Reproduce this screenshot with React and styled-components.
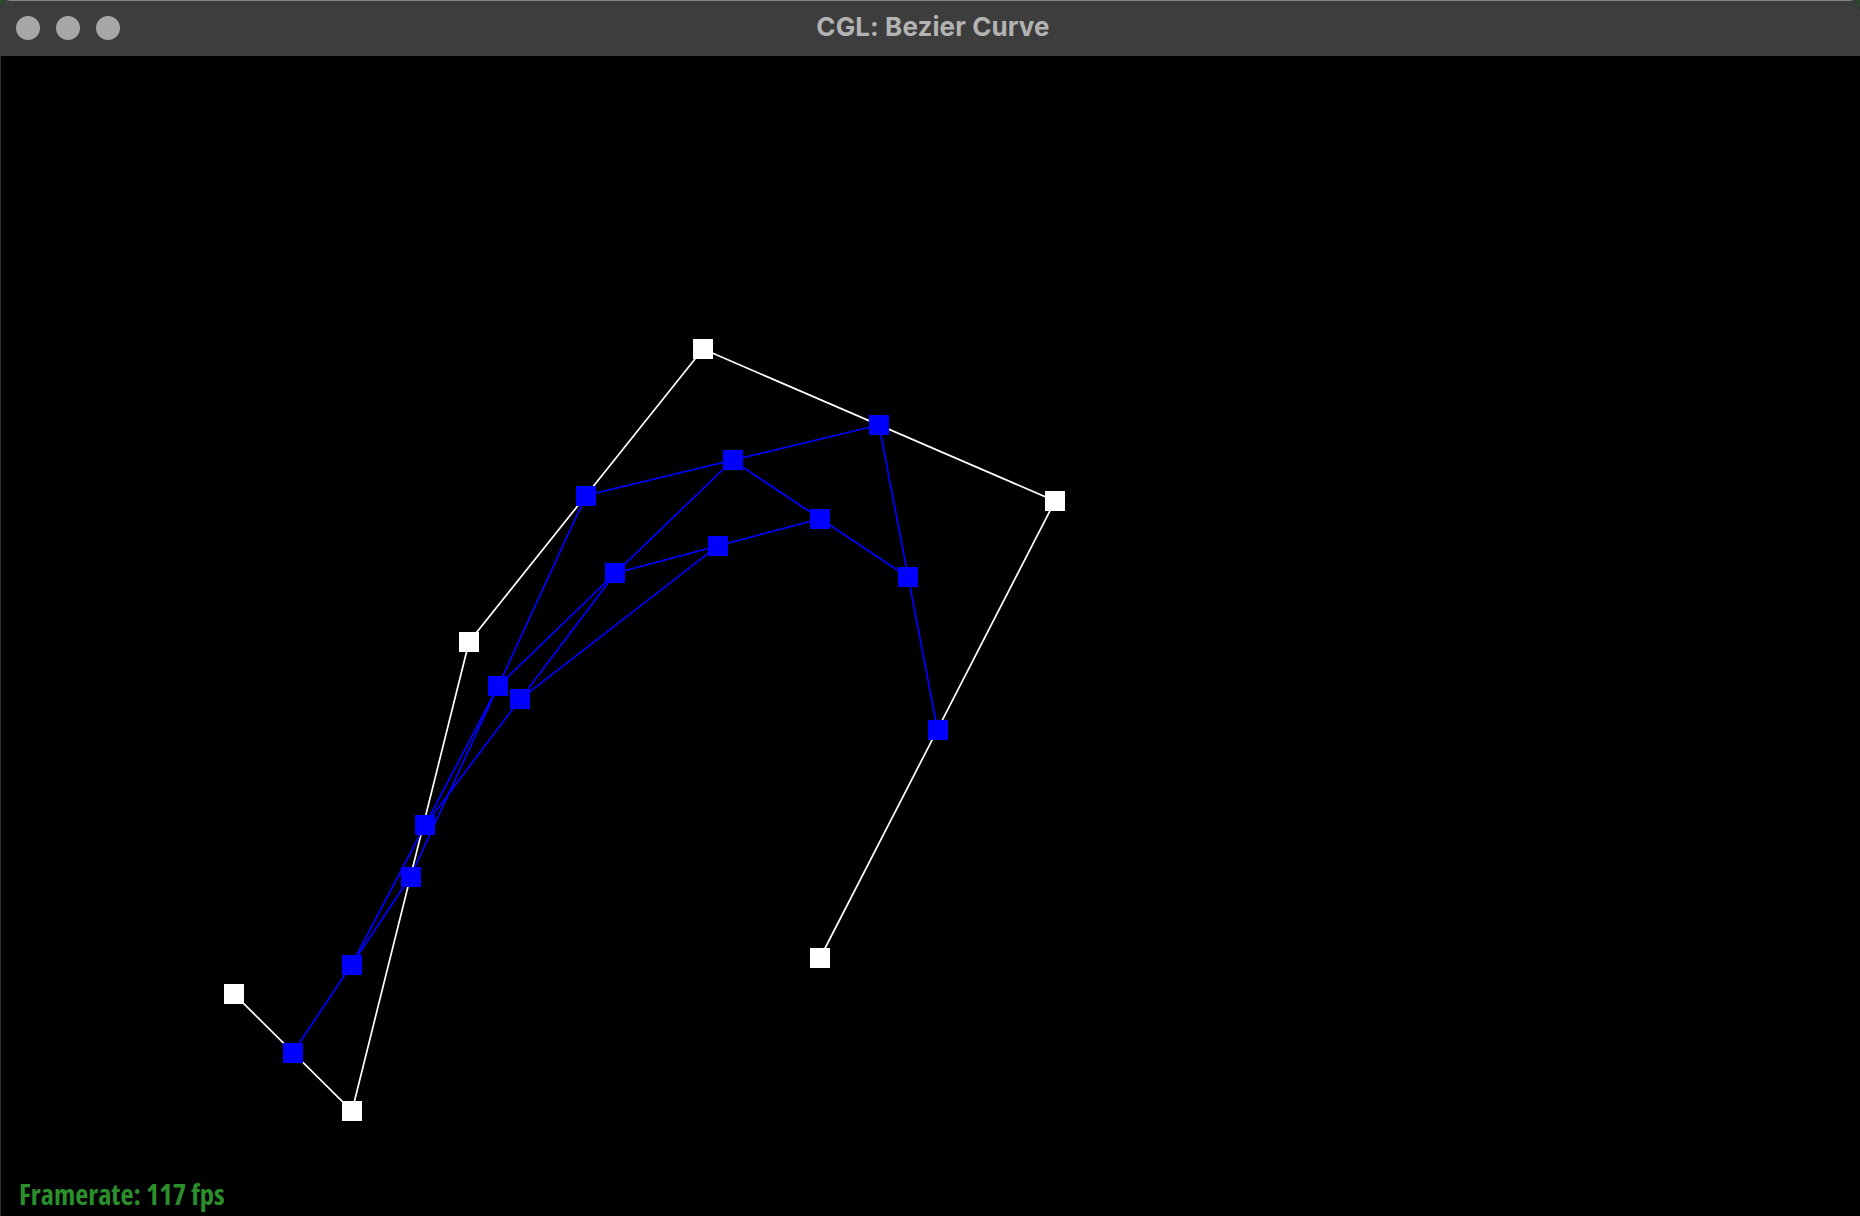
import React from "react";
import styled, { createGlobalStyle } from "styled-components";

const Global = createGlobalStyle`
  html, body { margin: 0; padding: 0; background: #2c4a2c; }
  #root { width: 1860px; height: 1216px; }
`;

const Window = styled.div`
  width: 1860px;
  height: 1216px;
  display: flex;
  flex-direction: column;
  border-radius: 11px 11px 0 0;
  overflow: hidden;
  background: #000;
  box-shadow: inset 1px 0 0 #3a3a3a;
`;

const TitleBar = styled.div`
  height: 56px;
  flex: none;
  position: relative;
  display: flex;
  align-items: center;
  justify-content: center;
  background: #3d3d3d;
  border-top: 1px solid #858585;
  box-sizing: border-box;
`;

const Lights = styled.div`
  position: absolute;
  left: 16px;
  top: 15px;
  display: flex;
  gap: 16px;
`;

const Light = styled.span`
  width: 24px;
  height: 24px;
  border-radius: 50%;
  background: #a6a6a6;
`;

const Title = styled.div`
  font-family: Inter, "Liberation Sans", sans-serif;
  font-weight: 700;
  font-size: 26px;
  color: #b3b3b3;
  letter-spacing: 0.1px;
  margin-top: -4px;
  margin-left: 6px;
`;

const Canvas = styled.div`
  flex: 1;
  position: relative;
  display: flex;
  align-items: flex-end;
  padding: 0 0 5px 19px;
  background: #000;
  box-shadow: inset 1px 0 0 #2e2e2e;
`;

const Drawing = styled.svg`
  position: absolute;
  inset: 0;
  width: 100%;
  height: 100%;
`;

const Fps = styled.div`
  position: relative;
  font-family: "Open Sans", "Noto Sans", sans-serif;
  font-weight: 700;
  font-stretch: 75%;
  font-size: 28.5px;
  line-height: 34px;
  color: #2b8f2b;
`;

const control = [
  [234, 994],
  [352, 1111],
  [469, 642],
  [703, 349],
  [1055, 501],
  [820, 958],
];

function levels(pts, t) {
  const out = [];
  let cur = pts;
  while (cur.length > 2) {
    const next = [];
    for (let i = 0; i < cur.length - 1; i++) {
      next.push([
        cur[i][0] + (cur[i + 1][0] - cur[i][0]) * t,
        cur[i][1] + (cur[i + 1][1] - cur[i][1]) * t,
      ]);
    }
    out.push(next);
    cur = next;
  }
  return out;
}

const OFFSET_Y = 56;

function Poly({ pts, color }) {
  return (
    <polyline
      points={pts.map(([x, y]) => `${x},${y - OFFSET_Y}`).join(" ")}
      fill="none"
      stroke={color}
      strokeWidth="1.7"
    />
  );
}

function Squares({ pts, color }) {
  return pts.map(([x, y], i) => (
    <rect
      key={i}
      x={Math.round(x - 10)}
      y={Math.round(y - 10 - OFFSET_Y)}
      width="20"
      height="20"
      fill={color}
      shapeRendering="crispEdges"
    />
  ));
}

export default function App() {
  const inner = levels(control, 0.5);
  return (
    <>
      <Global />
      <Window>
        <TitleBar>
          <Lights>
            <Light />
            <Light />
            <Light />
          </Lights>
          <Title>CGL: Bezier Curve</Title>
        </TitleBar>
        <Canvas>
          <Drawing>
            <Poly pts={control} color="#ffffff" />
            {inner.map((lv, i) => (
              <Poly key={i} pts={lv} color="#0000ff" />
            ))}
            <Squares pts={control} color="#ffffff" />
            {inner.map((lv, i) => (
              <Squares key={i} pts={lv} color="#0000ff" />
            ))}
          </Drawing>
          <Fps>Framerate: 117 fps</Fps>
        </Canvas>
      </Window>
    </>
  );
}
